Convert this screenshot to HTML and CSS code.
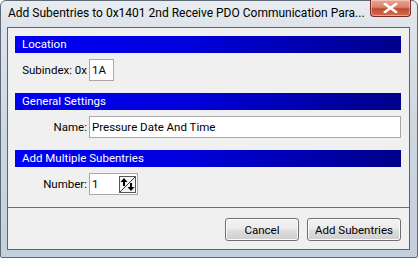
FILE: index.html
```html
<!DOCTYPE html>
<html>
<head>
<meta charset="utf-8">
<link rel="stylesheet" href="styles.css">
</head>
<body>
<div class="window">
  <div class="titlebar">
    <span class="title">Add Subentries to 0x1401 2nd Receive PDO Communication Para...</span>
    <div class="close"><svg width="15" height="10" viewBox="0 0 15 10"><path d="M2 1 L13 9 M13 1 L2 9" stroke="#fff" stroke-width="2.6" stroke-linecap="square"/></svg></div>
  </div>
  <div class="client">
    <div class="content">
      <div class="section-bar">Location</div>
      <div class="row">
        <label class="lbl">Subindex: 0x</label>
        <div class="field field-small">1A</div>
      </div>
      <div class="section-bar">General Settings</div>
      <div class="row">
        <label class="lbl">Name:</label>
        <div class="field field-wide">Pressure Date And Time</div>
      </div>
      <div class="section-bar">Add Multiple Subentries</div>
      <div class="row">
        <label class="lbl">Number:</label>
        <div class="field field-spin">
          <span>1</span>
          <svg class="spin" width="17" height="17" viewBox="0 0 17 17">
            <rect x="0.5" y="0.5" width="16" height="16" fill="#f4f4f4" stroke="#555"/>
            <path d="M1 16 L16 1" stroke="#333" stroke-width="1"/>
            <path d="M5 2 L1.5 6 L8.5 6 Z" fill="#000"/>
            <rect x="4" y="6" width="2" height="4" fill="#000"/>
            <path d="M12 15 L8.5 11 L15.5 11 Z" fill="#000"/>
            <rect x="11" y="7" width="2" height="4" fill="#000"/>
          </svg>
        </div>
      </div>
    </div>
    <div class="footer">
      <button class="btn btn-cancel">Cancel</button>
      <button class="btn btn-add">Add Subentries</button>
    </div>
  </div>
</div>
</body>
</html>
```

FILE: styles.css
```css
html, body {
  margin: 0;
  padding: 0;
  width: 418px;
  height: 258px;
  overflow: hidden;
  background: #fff;
}

.window {
  box-sizing: border-box;
  width: 418px;
  height: 258px;
  border: 1px solid #5d6b78;
  border-radius: 6px 6px 2px 2px;
  background: linear-gradient(180deg, #e9edf1 0px, #dde3e9 26px, #cfd8e1 120px, #c3cfdb 258px);
  display: flex;
  flex-direction: column;
  font-family: Roboto, "Liberation Sans", sans-serif;
}

.titlebar {
  height: 26px;
  display: flex;
  align-items: flex-start;
  justify-content: space-between;
  padding-left: 7px;
}

.title {
  font-size: 12px;
  color: #000;
  margin-top: 5px;
  white-space: nowrap;
}

.close {
  width: 41px;
  height: 17px;
  margin-right: 6px;
  margin-top: -1px;
  box-sizing: border-box;
  border: 1px solid #7a2a20;
  border-top: none;
  border-radius: 0 0 4px 4px;
  background: linear-gradient(180deg, #e6a596 0%, #d9826f 45%, #c4482f 55%, #d1704f 100%);
  box-shadow: inset 0 0 0 1px rgba(255, 220, 210, 0.5);
  display: flex;
  align-items: center;
  justify-content: center;
}

.client {
  flex: 1;
  margin: 0 7px 7px 6px;
  border: 1px solid #59656f;
  background: #f0f0f0;
  display: flex;
  flex-direction: column;
}

.content {
  padding: 8px 8px 0 7px;
  display: flex;
  flex-direction: column;
}

.section-bar {
  height: 17px;
  line-height: 17px;
  padding-left: 7px;
  color: #fff;
  font-size: 11.5px;
  background: linear-gradient(90deg, #0000f4 0%, #0000dc 45%, #00008a 100%);
  white-space: nowrap;
}

.row {
  display: flex;
  align-items: center;
  height: 22px;
  margin-top: 6px;
  margin-bottom: 12px;
}

.lbl {
  width: 74px;
  padding-right: 2px;
  box-sizing: border-box;
  text-align: right;
  font-size: 11.5px;
  color: #000;
  white-space: nowrap;
}

.field {
  box-sizing: border-box;
  height: 22px;
  background: #fff;
  border: 1px solid #a8a8a8;
  font-size: 11.5px;
  line-height: 20px;
  padding-left: 2px;
  color: #000;
  white-space: nowrap;
}

.field-small {
  width: 25px;
}

.field-wide {
  flex: 1;
}

.field-spin {
  width: 49px;
  display: flex;
  align-items: center;
  justify-content: space-between;
  padding-right: 1px;
}

.spin {
  display: block;
}

.footer {
  margin-top: auto;
  border-top: 1px solid #707070;
  height: 42px;
  box-sizing: border-box;
  display: flex;
  justify-content: flex-end;
  align-items: flex-start;
  padding: 10px 8px 0 0;
  gap: 8px;
}

.btn {
  box-sizing: border-box;
  height: 23px;
  font-family: Roboto, "Liberation Sans", sans-serif;
  font-size: 11.5px;
  color: #000;
  border: 1px solid #707070;
  border-radius: 3px;
  background: linear-gradient(180deg, #f2f2f2 0%, #ebebeb 48%, #dddddd 52%, #cfcfcf 100%);
  box-shadow: inset 0 0 0 1px #fbfbfb;
  padding: 0;
}

.btn-cancel {
  width: 74px;
}

.btn-add {
  width: 94px;
}
```
